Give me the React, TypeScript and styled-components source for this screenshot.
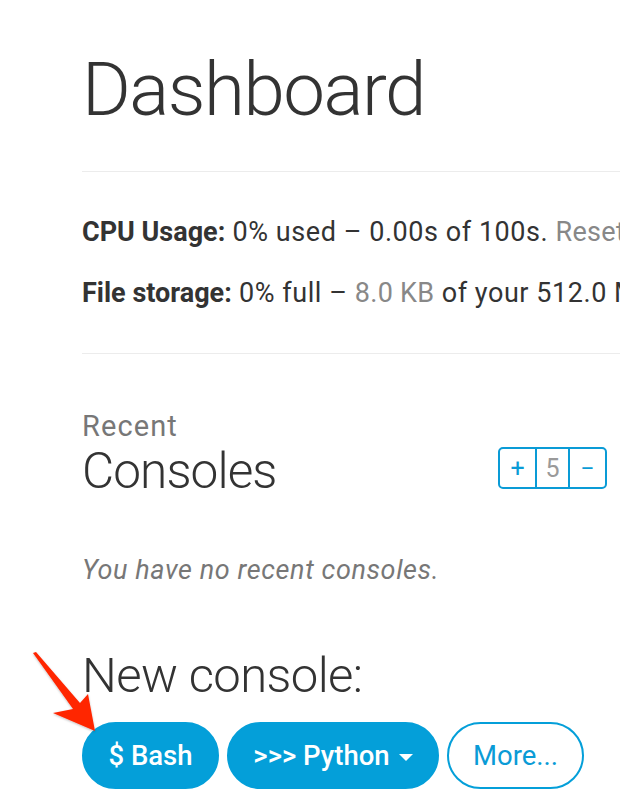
import React from "react";
import styled, { createGlobalStyle } from "styled-components";

const GlobalStyle = createGlobalStyle`
  html, body {
    margin: 0;
    padding: 0;
    background: #ffffff;
    overflow: hidden;
  }
  body {
    font-family: Roboto, "Liberation Sans", Arial, sans-serif;
    color: #333333;
  }
`;

const Page = styled.div`
  position: relative;
  width: 620px;
  height: 800px;
  overflow: hidden;
  box-sizing: border-box;
  padding: 52px 0 0 82px;
`;

const Title = styled.h1`
  margin: 0;
  font-size: 74.5px;
  line-height: 76px;
  font-weight: 300;
  letter-spacing: -1.5px;
  color: #333333;
  white-space: nowrap;
`;

const Divider = styled.hr<{ $top: number }>`
  margin: ${(p) => p.$top}px 0 0 0;
  border: 0;
  height: 1px;
  background: #ececec;
  width: 700px;
`;

const Stats = styled.div`
  display: flex;
  flex-direction: column;
  gap: 25px;
  padding: 42px 0 42px 0;
`;

const StatLine = styled.p`
  margin: 0;
  font-size: 27px;
  line-height: 36px;
  font-weight: 400;
  letter-spacing: 0.55px;
  white-space: nowrap;
  color: #333333;
`;

const Label = styled.strong`
  font-weight: 700;
  letter-spacing: 0;
`;

const Muted = styled.span`
  color: #888888;
  letter-spacing: 0.3px;
`;

const Kicker = styled.div`
  margin-top: 58px;
  font-size: 29px;
  line-height: 29px;
  font-weight: 400;
  letter-spacing: 1.1px;
  color: #777777;
`;

const HeaderRow = styled.div`
  margin-top: 5px;
  width: 525px;
  display: flex;
  justify-content: space-between;
  align-items: flex-start;
`;

const SectionTitle = styled.h2`
  margin: 0;
  font-size: 49.5px;
  line-height: 50px;
  font-weight: 300;
  letter-spacing: -0.9px;
  color: #333333;
`;

const Stepper = styled.div`
  margin-top: 1px;
  display: flex;
  height: 42px;
  box-sizing: border-box;
  border: 2px solid #0a9bd6;
  border-radius: 5px;
  overflow: hidden;
`;

const StepCell = styled.div<{ $muted?: boolean; $mid?: boolean }>`
  width: 35px;
  display: flex;
  align-items: center;
  justify-content: center;
  font-size: 25px;
  font-weight: 400;
  color: ${(p) => (p.$muted ? "#9a9a9a" : "#0a9bd6")};
  border-left: ${(p) => (p.$mid ? "2px solid #0a9bd6" : "0")};
  border-right: ${(p) => (p.$mid ? "2px solid #0a9bd6" : "0")};
  box-shadow: ${(p) =>
    p.$mid ? "inset 0 2px 0 #7cc9ea, inset 0 -2px 0 #7cc9ea" : "none"};
  margin: ${(p) => (p.$mid ? "-2px 0" : "0")};
  box-sizing: border-box;
`;

const EmptyNote = styled.p`
  margin: 56px 0 0 0;
  font-size: 27px;
  line-height: 36px;
  font-style: italic;
  font-weight: 400;
  letter-spacing: 0.6px;
  color: #777777;
`;

const NewTitle = styled.h2`
  margin: 63px 0 0 0;
  font-size: 49px;
  line-height: 50px;
  font-weight: 300;
  letter-spacing: -0.6px;
  color: #333333;
`;

const ButtonRow = styled.div`
  margin-top: 21px;
  display: flex;
  gap: 8px;
`;

const PillButton = styled.button<{ $outline?: boolean; $w: number }>`
  width: ${(p) => p.$w}px;
  height: 67px;
  box-sizing: border-box;
  border-radius: 34px;
  border: 2px solid #049fd9;
  background: ${(p) => (p.$outline ? "#ffffff" : "#049fd9")};
  color: ${(p) => (p.$outline ? "#0a9bd6" : "#ffffff")};
  font-family: Roboto, "Liberation Sans", Arial, sans-serif;
  font-size: 27.5px;
  font-weight: ${(p) => (p.$outline ? 400 : 500)};
  display: flex;
  align-items: center;
  justify-content: center;
  gap: 9px;
  padding: 0;
  cursor: pointer;
`;

const Caret = styled.span`
  width: 0;
  height: 0;
  border-left: 7px solid transparent;
  border-right: 7px solid transparent;
  border-top: 7px solid #ffffff;
  margin-top: 3px;
`;

const ArrowOverlay = styled.svg`
  position: absolute;
  left: 0;
  top: 0;
  width: 620px;
  height: 800px;
  pointer-events: none;
  overflow: visible;
`;

export default function App() {
  return (
    <>
      <GlobalStyle />
      <Page>
        <Title>Dashboard</Title>
        <Divider $top={43} />
        <Stats>
          <StatLine>
            <Label>CPU Usage:</Label> 0% used – 0.00s of 100s. <Muted>Resets in 23 hours, 59 minutes</Muted>
          </StatLine>
          <StatLine>
            <Label>File storage:</Label> 0% full – <Muted>8.0 KB</Muted> of your 512.0 MB quota
          </StatLine>
        </Stats>
        <Divider $top={0} />
        <Kicker>Recent</Kicker>
        <HeaderRow>
          <SectionTitle>Consoles</SectionTitle>
          <Stepper>
            <StepCell>+</StepCell>
            <StepCell $mid $muted>5</StepCell>
            <StepCell>−</StepCell>
          </Stepper>
        </HeaderRow>
        <EmptyNote>You have no recent consoles.</EmptyNote>
        <NewTitle>New console:</NewTitle>
        <ButtonRow>
          <PillButton $w={137}>$ Bash</PillButton>
          <PillButton $w={212}>
            &gt;&gt;&gt; Python
            <Caret />
          </PillButton>
          <PillButton $w={137} $outline>
            More...
          </PillButton>
        </ButtonRow>
        <ArrowOverlay viewBox="0 0 620 800">
          <defs>
            <filter id="arrowShadow" x="-20%" y="-20%" width="140%" height="140%">
              <feDropShadow dx="0" dy="1" stdDeviation="1.2" floodColor="#000" floodOpacity="0.25" />
            </filter>
          </defs>
          <polygon
            points="33,653 36,652 80,703 88,694 95,731 53,713 73,709"
            fill="#ff2600"
            filter="url(#arrowShadow)"
          />
        </ArrowOverlay>
      </Page>
    </>
  );
}
